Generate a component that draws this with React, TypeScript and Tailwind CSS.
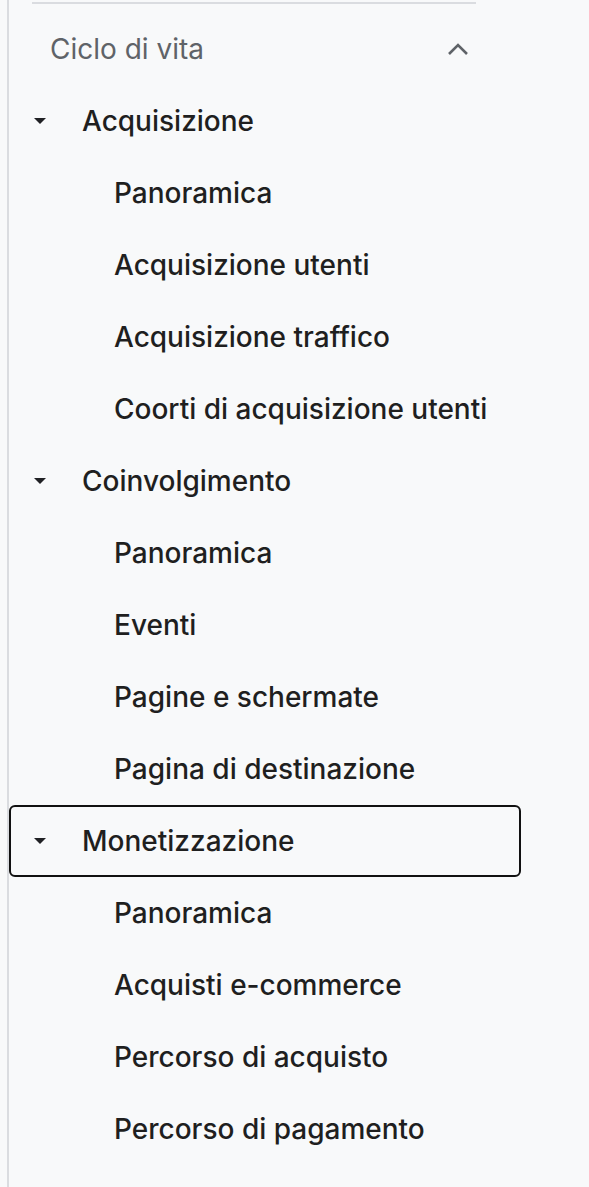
import React from "react";

type Item = { label: string; level: 1 | 2; focused?: boolean };

const items: Item[] = [
  { label: "Acquisizione", level: 1 },
  { label: "Panoramica", level: 2 },
  { label: "Acquisizione utenti", level: 2 },
  { label: "Acquisizione traffico", level: 2 },
  { label: "Coorti di acquisizione utenti", level: 2 },
  { label: "Coinvolgimento", level: 1 },
  { label: "Panoramica", level: 2 },
  { label: "Eventi", level: 2 },
  { label: "Pagine e schermate", level: 2 },
  { label: "Pagina di destinazione", level: 2 },
  { label: "Monetizzazione", level: 1, focused: true },
  { label: "Panoramica", level: 2 },
  { label: "Acquisti e-commerce", level: 2 },
  { label: "Percorso di acquisto", level: 2 },
  { label: "Percorso di pagamento", level: 2 },
];

function Caret() {
  return (
    <svg width="14" height="8" viewBox="0 0 14 8" className="shrink-0">
      <path d="M1 1h12L7 7z" fill="#202124" />
    </svg>
  );
}

function ChevronUp() {
  return (
    <svg width="22" height="14" viewBox="0 0 22 14">
      <path d="M2 12 L11 3 L20 12" fill="none" stroke="#5f6368" strokeWidth="2.6" />
    </svg>
  );
}

export default function App() {
  return (
    <div
      className="flex h-[1187px] w-full bg-[#f8f9fa] text-[#1f1f1f]"
      style={{ fontFamily: "Inter, 'Noto Sans', sans-serif" }}
    >
      <div className="ml-[7px] w-[2px] shrink-0 bg-[#dadce0]" />
      <nav className="flex flex-col">
        <div className="mt-[2px] ml-[23px] h-[2px] w-[444px] bg-[#dadce0]" />
        <div className="mt-[9px] flex h-[72px] w-[470px] items-center justify-between pl-[41px] pr-[10px]">
          <span className="text-[28px] text-[#5f6368]">Ciclo di vita</span>
          <ChevronUp />
        </div>
        {items.map((item, i) =>
          item.level === 1 ? (
            <div
              key={i}
              className={
                "flex h-[72px] w-[512px] items-center " +
                (item.focused ? "rounded-[6px] border-2 border-[#111111] pl-[22px]" : "pl-[24px]")
              }
            >
              <Caret />
              <span className="ml-[35px] text-[28px] font-medium">{item.label}</span>
            </div>
          ) : (
            <div key={i} className="flex h-[72px] items-center pl-[105px]">
              <span className="text-[28px] font-medium">{item.label}</span>
            </div>
          )
        )}
      </nav>
    </div>
  );
}
